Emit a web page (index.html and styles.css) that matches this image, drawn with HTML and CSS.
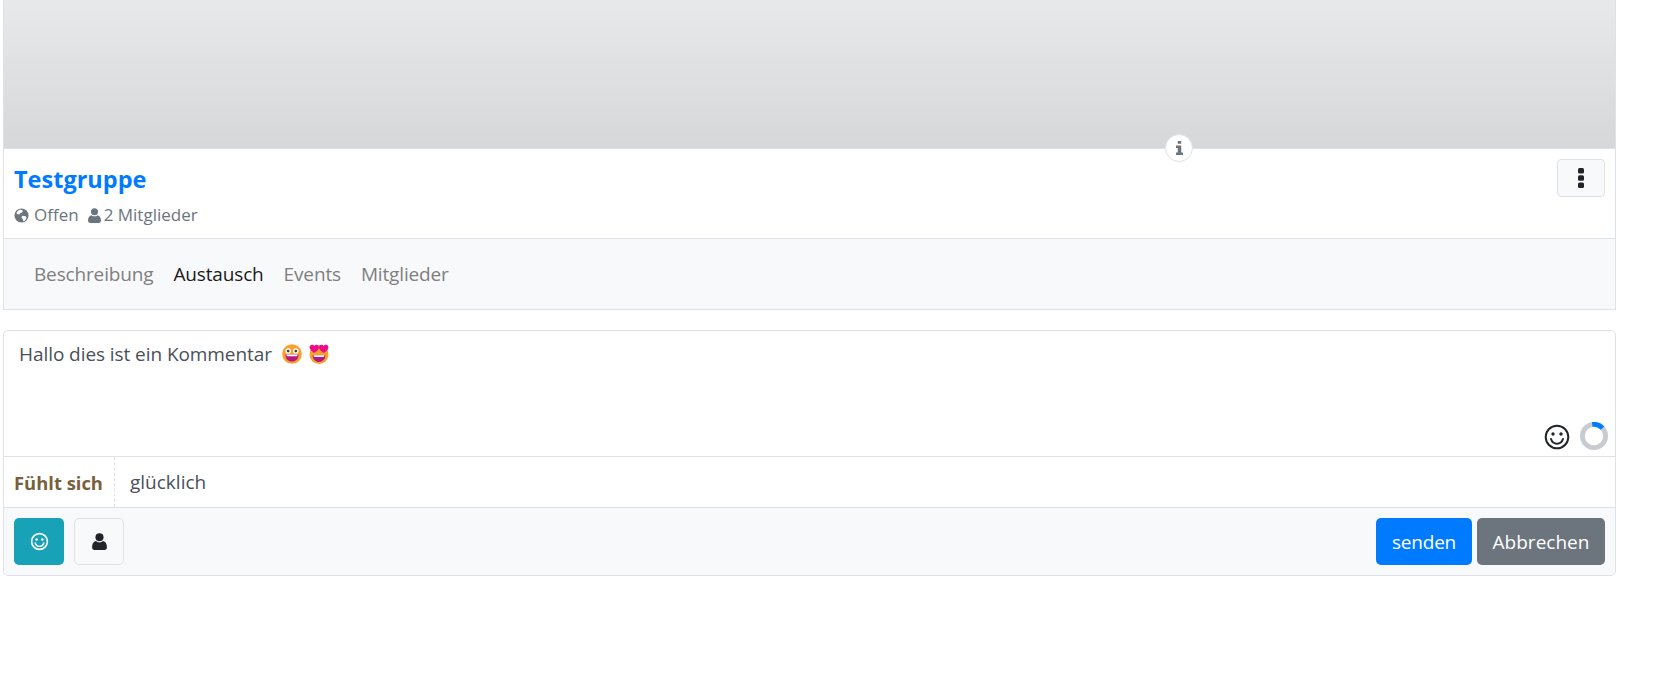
FILE: index.html
```html
<!DOCTYPE html>
<html lang="de">
<head>
<meta charset="utf-8">
<title>Testgruppe</title>
<link rel="stylesheet" href="styles.css">
</head>
<body>
<main class="page">
  <section class="group-card">
    <div class="banner"></div>
    <span class="info-badge">
      <svg viewBox="0 0 10 16" width="9" height="14"><path class="fill-grey" d="M3 0h4v3H3zM1 5h6v8h2v3H1v-3h2V8H1z"/></svg>
    </span>
    <div class="group-head">
      <div class="group-text">
        <a class="group-title">Testgruppe</a>
        <div class="group-meta">
          <svg class="meta-icon meta-globe" viewBox="0 0 16 16" width="15" height="15"><circle class="fill-grey" cx="8" cy="8" r="7.5"/><path fill="#fff" d="M6.8 1.6 9.6 3 8.6 4.8 6.8 5.2 5.6 7 3.2 6.4 2.6 5.2C3.4 3.4 5 2 6.8 1.6zM9 8.2l3.6.6.8 1.6-1.6 2.8-1.8 1-.6-2.4L7.8 10.4z"/></svg>
          <span class="meta-item">Offen</span>
          <svg class="meta-icon meta-user" viewBox="0 0 14 16" width="13" height="15"><circle class="fill-grey" cx="7" cy="4" r="3.8"/><path class="fill-grey" d="M0 13.4C0 10.4 1.4 8.2 3.6 7.6 4.5 8.4 5.7 8.9 7 8.9s2.500-.5 3.400-1.300C12.600 8.200 14 10.400 14 13.400 14 15 13 16 11.600 16H2.400C1 16 0 15 0 13.400z"/></svg>
          <span>2 Mitglieder</span>
        </div>
      </div>
      <button class="kebab" type="button" aria-label="Menü">
        <svg viewBox="0 0 6 20" width="6" height="20"><rect class="fill-dark" width="6" height="5.500" rx="1.500"/><rect class="fill-dark" y="7.200" width="6" height="5.500" rx="1.500"/><rect class="fill-dark" y="14.500" width="6" height="5.500" rx="1.500"/></svg>
      </button>
    </div>
    <nav class="tabs">
      <a class="tab">Beschreibung</a>
      <a class="tab tab-active">Austausch</a>
      <a class="tab">Events</a>
      <a class="tab">Mitglieder</a>
    </nav>
  </section>

  <section class="composer">
    <div class="editor">
      <p class="editor-text"><span>Hallo dies ist ein Kommentar</span>
        <span class="emoji-row">
        <svg class="emoji" viewBox="0 0 22 22" width="20" height="20"><circle cx="11" cy="11" r="10.800" fill="#f9a02c"/><circle cx="6.800" cy="7.800" r="3" fill="#fff"/><circle cx="15.200" cy="7.800" r="3" fill="#fff"/><circle cx="6.800" cy="7.800" r="1.500" fill="#3f3a3a"/><circle cx="15.200" cy="7.800" r="1.500" fill="#3f3a3a"/><path d="M3.800 11.500h14.400c0 4.800-3.200 7.800-7.200 7.800s-7.200-3-7.200-7.800z" fill="#b5187f"/><path d="M4.800 11.500h12.400l-.6 2H5.400z" fill="#fff"/></svg>
        <svg class="emoji" viewBox="0 0 22 22" width="20" height="20"><circle cx="11" cy="11.500" r="10.400" fill="#f9a02c"/><path d="M5.800 9.800C3.500 8 .6 6.400.6 3.800.6 1.900 2 .8 3.400.8c1 0 1.900.5 2.400 1.400C6.300 1.300 7.200.8 8.200.8c1.500 0 2.800 1.100 2.800 3 0 2.600-2.900 4.200-5.200 6z" fill="#ec0a8c"/><path d="M16.200 9.800C13.900 8 11 6.400 11 3.800c0-1.900 1.300-3 2.800-3 1 0 1.900.5 2.400 1.400.5-.9 1.400-1.400 2.400-1.400 1.500 0 2.800 1.100 2.800 3 0 2.600-2.900 4.200-5.200 6z" fill="#ec0a8c"/><path d="M4 12.500h14c0 4.500-3.100 7.300-7 7.300s-7-2.800-7-7.300z" fill="#b5187f"/><path d="M5 12.500h12l-.6 1.800H5.600z" fill="#fff"/></svg>
        </span>
      </p>
      <div class="editor-tools">
        <svg viewBox="0 0 26 26" width="26" height="26" class="tool-smile"><circle cx="13" cy="13" r="11.300" fill="none" stroke="#212529" stroke-width="2"/><circle cx="9" cy="10" r="1.700" fill="#212529"/><circle cx="17" cy="10" r="1.700" fill="#212529"/><path d="M7 15c1 3 3.400 4.700 6 4.700s5-1.700 6-4.700" fill="none" stroke="#212529" stroke-width="2" stroke-linecap="round"/></svg>
        <svg viewBox="0 0 28 28" width="28" height="28"><circle cx="14" cy="14" r="11.600" fill="none" stroke="#c8cbcf" stroke-width="4.800"/><path d="M12.200 2.500A11.600 11.600 0 0 1 22.500 6.100" fill="none" stroke="#007bff" stroke-width="4.800"/></svg>
      </div>
    </div>
    <div class="feeling">
      <strong class="feeling-label">Fühlt sich</strong>
      <span class="feeling-value">glücklich</span>
    </div>
    <div class="actions">
      <button class="btn btn-icon btn-teal" type="button" aria-label="Gefühl">
        <svg viewBox="0 0 20 20" width="19" height="19"><circle cx="10" cy="10" r="8.300" fill="none" stroke="#fff" stroke-width="1.700"/><circle cx="7" cy="7.800" r="1.300" fill="#fff"/><circle cx="13" cy="7.800" r="1.300" fill="#fff"/><path d="M5.500 11.500c.7 2.300 2.500 3.600 4.500 3.600s3.800-1.300 4.500-3.600" fill="none" stroke="#fff" stroke-width="1.500" stroke-linecap="round"/></svg>
      </button>
      <button class="btn btn-icon btn-light" type="button" aria-label="Person">
        <svg viewBox="0 0 14 16" width="15" height="17"><circle class="fill-dark" cx="7" cy="4" r="3.800"/><path class="fill-dark" d="M0 13.400C0 10.400 1.400 8.200 3.600 7.600 4.500 8.400 5.700 8.900 7 8.900s2.500-.5 3.400-1.300C12.600 8.200 14 10.400 14 13.400 14 15 13 16 11.600 16H2.400C1 16 0 15 0 13.400z"/></svg>
      </button>
      <button class="btn btn-primary" type="button">senden</button>
      <button class="btn btn-secondary" type="button">Abbrechen</button>
    </div>
  </section>
</main>
</body>
</html>
```
FILE: styles.css
```css
* { box-sizing: border-box; }
html, body { margin: 0; padding: 0; background: #fff; }
body {
  font-family: "Open Sans", "Noto Sans", sans-serif;
  color: #495057;
  height: 697px;
  overflow: hidden;
}
.page { width: 1613px; margin-left: 3px; display: flex; flex-direction: column; gap: 20px; }
.fill-grey { fill: #6c757d; }
.fill-dark { fill: #212529; }

.group-card { position: relative; border: 1px solid #dee2e6; border-top: 0; background: #fff; }
.banner { height: 148px; background: linear-gradient(#e8e9eb, #d6d7d9); }
.info-badge {
  position: absolute; left: 1161px; top: 134px;
  width: 28px; height: 28px; border-radius: 50%;
  background: #fff; border: 1px solid #dee2e6;
  display: flex; align-items: center; justify-content: center;
}
.group-head {
  height: 91px; padding: 11px 10px 0 10px;
  display: flex; justify-content: space-between; align-items: flex-start;
  border-top: 1px solid #dee2e6; border-bottom: 1px solid #dee2e6;
}
.kebab { margin-top: -1px; }
.group-text { display: flex; flex-direction: column; }
.group-title { font-size: 23.5px; line-height: 38px; font-weight: 700; color: #007bff; }
.group-meta { display: flex; align-items: center; font-size: 17px; line-height: 24px; color: #6c757d; margin-top: 5px; }
.meta-icon { margin-right: 3px; }
.meta-globe { margin-right: 5px; }
.meta-user { margin-left: 9px; }
.meta-item { display: inline-block; }
.kebab {
  width: 48px; height: 38px; padding: 0;
  background: #f8f9fa; border: 1px solid #dee2e6; border-radius: 4px;
  display: flex; align-items: center; justify-content: center;
}
.tabs { height: 70px; background: #f8f9fa; display: flex; align-items: center; padding-left: 30px; gap: 20px; font-size: 19px; color: #7f7f7f; letter-spacing: -.15px; }
.tab-active { color: #1b1b1b; }

.composer { border: 1px solid #dee2e6; border-radius: 5px; display: flex; flex-direction: column; background: #fff; }
.editor { position: relative; height: 125px; padding: 10px 15px; }
.editor-text { margin: 0; font-size: 19px; line-height: 26px; letter-spacing: -.07px; display: flex; align-items: center; gap: 10px; }
.emoji-row { display: flex; gap: 7px; }
.emoji { flex: none; }
.editor-tools { position: absolute; right: 7px; bottom: 6px; display: flex; align-items: flex-end; gap: 10px; }
.feeling { height: 51px; border-top: 1px solid #dee2e6; display: flex; align-items: stretch; }
.feeling-label { width: 111px; padding-left: 10px; display: flex; align-items: center; border-right: 1px dashed #dee2e6; font-size: 18.4px; font-weight: 700; color: #7a5f3c; }
.feeling-value { padding-left: 15px; display: flex; align-items: center; font-size: 19px; }
.actions { height: 68px; border-top: 1px solid #dee2e6; background: #f8f9fa; border-radius: 0 0 5px 5px; padding: 10px; display: flex; align-items: stretch; gap: 5px; }
.btn { border: 1px solid transparent; border-radius: 5px; font-family: inherit; font-size: 19px; color: #fff; padding: 0; display: flex; align-items: center; justify-content: center; }
.btn-icon { width: 50px; }
.btn-teal { background: #17a2b8; margin-right: 5px; }
.btn-light { background: #f8f9fa; border-color: #dee2e6; margin-right: auto; }
.btn-primary { background: #007bff; width: 96px; letter-spacing: -.2px; }
.btn-secondary { background: #6c757d; width: 128px; }
```
